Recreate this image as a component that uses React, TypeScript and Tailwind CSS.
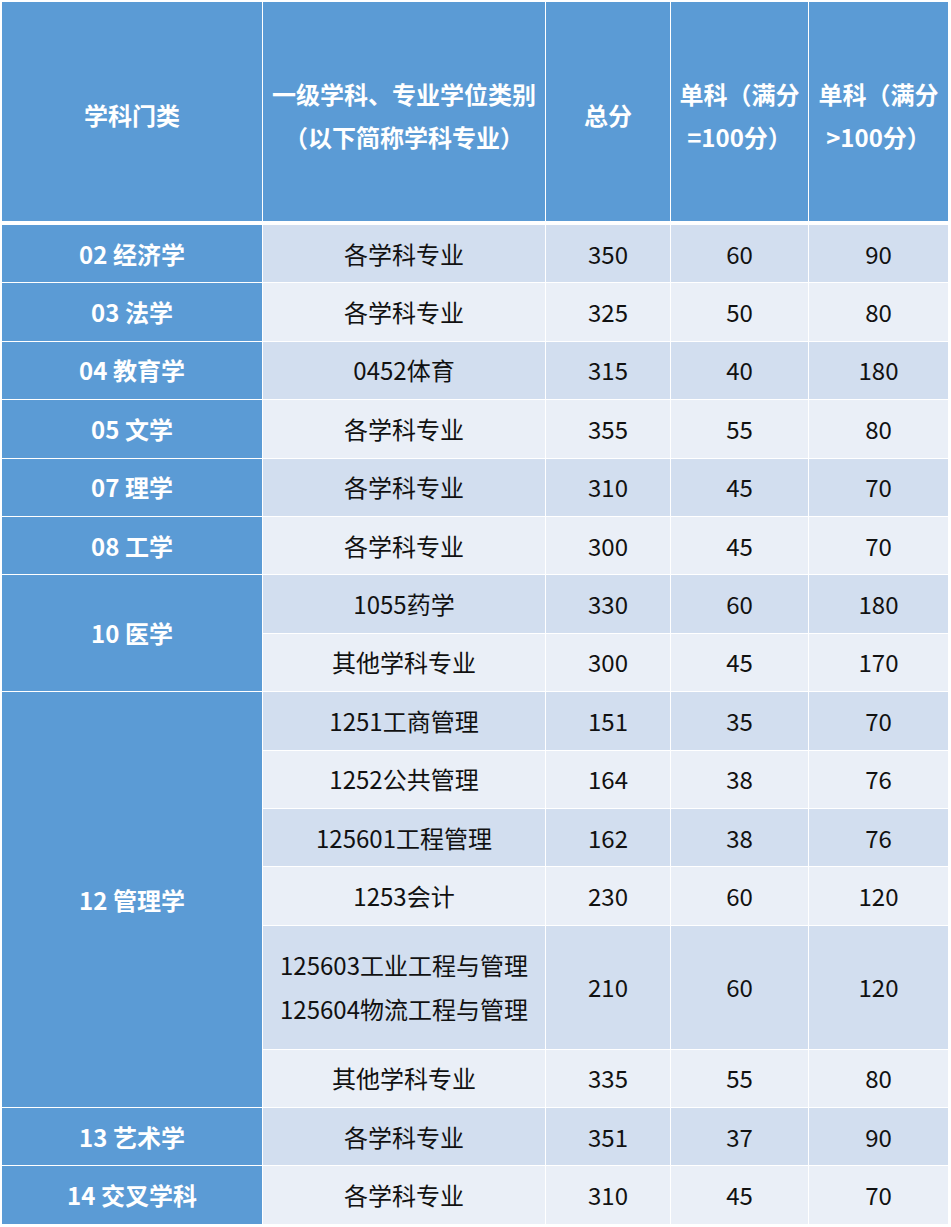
import React from "react";

type Row = { sub: React.ReactNode; total: string; a: string; b: string; tall?: boolean };
type Group = { name: string; rows: Row[] };

const groups: Group[] = [
  { name: "02 经济学", rows: [{ sub: "各学科专业", total: "350", a: "60", b: "90" }] },
  { name: "03 法学", rows: [{ sub: "各学科专业", total: "325", a: "50", b: "80" }] },
  { name: "04 教育学", rows: [{ sub: "0452体育", total: "315", a: "40", b: "180" }] },
  { name: "05 文学", rows: [{ sub: "各学科专业", total: "355", a: "55", b: "80" }] },
  { name: "07 理学", rows: [{ sub: "各学科专业", total: "310", a: "45", b: "70" }] },
  { name: "08 工学", rows: [{ sub: "各学科专业", total: "300", a: "45", b: "70" }] },
  {
    name: "10 医学",
    rows: [
      { sub: "1055药学", total: "330", a: "60", b: "180" },
      { sub: "其他学科专业", total: "300", a: "45", b: "170" },
    ],
  },
  {
    name: "12 管理学",
    rows: [
      { sub: "1251工商管理", total: "151", a: "35", b: "70" },
      { sub: "1252公共管理", total: "164", a: "38", b: "76" },
      { sub: "125601工程管理", total: "162", a: "38", b: "76" },
      { sub: "1253会计", total: "230", a: "60", b: "120" },
      {
        sub: (
          <>
            125603工业工程与管理
            <br />
            125604物流工程与管理
          </>
        ),
        total: "210",
        a: "60",
        b: "120",
        tall: true,
      },
      { sub: "其他学科专业", total: "335", a: "55", b: "80" },
    ],
  },
  { name: "13 艺术学", rows: [{ sub: "各学科专业", total: "351", a: "37", b: "90" }] },
  { name: "14 交叉学科", rows: [{ sub: "各学科专业", total: "310", a: "45", b: "70" }] },
];

const head =
  "h-[219px] bg-[#5b9bd5] text-white font-bold text-[24px] flex items-center justify-center text-center leading-[43px] pt-[6px]";

export default function App() {
  let idx = 0;
  return (
    <div className="w-[951px] h-[1227px] bg-white pt-[2px] pl-[2px] font-['Noto_Sans_CJK_SC','Noto_Sans',sans-serif]">
      <div className="flex gap-[1px]">
        <div className={`${head} w-[260px]`}>学科门类</div>
        <div className={`${head} w-[282px]`}>
          <div>
            一级学科、专业学位类别
            <br />
            （以下简称学科专业）
          </div>
        </div>
        <div className={`${head} w-[124px]`}>总分</div>
        <div className={`${head} w-[137px]`}>
          <div>
            单科（满分
            <br />
            =100分）
          </div>
        </div>
        <div className={`${head} w-[139px]`}>
          <div>
            单科（满分
            <br />
            &gt;100分）
          </div>
        </div>
      </div>
      <div className="mt-[4px] flex flex-col gap-[1px]">
        {groups.map((g) => (
          <div key={g.name} className="flex gap-[1px]">
            <div className="w-[260px] bg-[#5b9bd5] text-white font-bold text-[24px] flex items-center justify-center">
              {g.name}
            </div>
            <div className="flex flex-col gap-[1px]">
              {g.rows.map((r, ri) => {
                const bg = idx++ % 2 === 0 ? "bg-[#d2deef]" : "bg-[#eaeff7]";
                const h = r.tall ? "h-[123px]" : "h-[57.4px]";
                const cell = `${bg} ${h} text-[#111111] text-[24px] flex items-center justify-center text-center`;
                return (
                  <div key={ri} className="flex gap-[1px]">
                    <div className={`${cell} w-[282px] leading-[44px]`}>
                      <div>{r.sub}</div>
                    </div>
                    <div className={`${cell} w-[124px]`}>{r.total}</div>
                    <div className={`${cell} w-[137px]`}>{r.a}</div>
                    <div className={`${cell} w-[139px]`}>{r.b}</div>
                  </div>
                );
              })}
            </div>
          </div>
        ))}
      </div>
    </div>
  );
}
